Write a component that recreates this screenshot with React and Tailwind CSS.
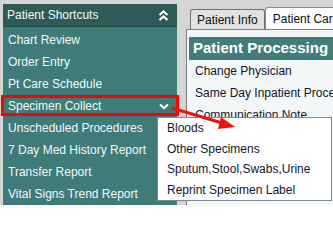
import React from 'react';

const shortcuts = [
  'Chart Review',
  'Order Entry',
  'Pt Care Schedule',
  'Specimen Collect',
  'Unscheduled Procedures',
  '7 Day Med History Report',
  'Transfer Report',
  'Vital Signs Trend Report',
];

const specimenMenu = ['Bloods', 'Other Specimens', 'Sputum,Stool,Swabs,Urine', 'Reprint Specimen Label'];

const processing = ['Change Physician', 'Same Day Inpatient Procedure', 'Communication Note'];

const ShortcutPanel = () => {
  return (
    <aside className="w-[174px] shrink-0 flex flex-col bg-[#3f7b78] text-[#f4f8f8]">
      {/* header */}
      <div className="h-[23px] shrink-0 flex items-center justify-between pl-[4px] pr-[8px] bg-[#2e5b58] border-b border-[#27504d]">
        <span className="text-[12px]">Patient Shortcuts</span>
        <svg width="11" height="11" viewBox="0 0 11 11" fill="none" stroke="white" strokeWidth="2.2">
          <polyline points="1.5,5 5.5,1.5 9.5,5" />
          <polyline points="1.5,10 5.5,6.5 9.5,10" />
        </svg>
      </div>
      <ul className="flex-1 pt-[2px]">
        {shortcuts.map((s) => (
          <li key={s} className="h-[22px] flex items-center justify-between pl-[5px] pr-[8px] text-[12px] whitespace-nowrap">
            <span>{s}</span>
            {s === 'Specimen Collect' && (
              <svg width="10" height="7" viewBox="0 0 10 7" fill="none" stroke="white" strokeWidth="2.2">
                <polyline points="1,1.5 5,5 9,1.5" />
              </svg>
            )}
          </li>
        ))}
      </ul>
    </aside>
  );
};

const CarePanel = () => {
  return (
    <main className="flex-1 flex flex-col ml-[9px] min-w-0">
      {/* tabs */}
      <div className="h-[25px] shrink-0 flex items-end pl-[4px] whitespace-nowrap">
        <div className="h-[20px] shrink-0 px-[6px] flex items-center bg-[#e2e2e2] border border-b-0 border-[#6f6f6f] rounded-t-[3px] text-[12px] text-[#111]">
          Patient Info
        </div>
        <div className="h-[22px] shrink-0 pl-[7px] pr-[8px] flex items-center bg-[#fcfcfc] border border-b-0 border-[#8a8a8a] rounded-t-[3px] text-[12px] text-[#111]">
          Patient Care
        </div>
      </div>
      <div className="flex-1 bg-[#f3f7f7] border-l border-t border-[#7e7e7e] pt-[7px] pl-[2px] whitespace-nowrap overflow-hidden">
        <div className="h-[23px] flex items-center pl-[4px] bg-[#427d7a] text-white text-[15px] font-bold">
          Patient Processing
        </div>
        {processing.map((p) => (
          <div key={p} className="h-[22px] flex items-center pl-[6px] text-[12px] text-[#14142e]">
            {p}
          </div>
        ))}
      </div>
    </main>
  );
};

export default function App() {
  return (
    <div className="relative w-[333px] h-[205px] overflow-hidden bg-[#d5d5d5] font-['Liberation_Sans',Arial,sans-serif]">
      <div className="flex h-full pt-[4px] pl-[3px]">
        <ShortcutPanel />
        <CarePanel />
      </div>

      {/* red highlight around Specimen Collect */}
      <div className="absolute left-[1px] top-[95px] w-[178px] h-[21px] border-[3px] border-[#ff0000] pointer-events-none" />

      {/* specimen dropdown */}
      <div className="absolute left-[157px] top-[117px] w-[175px] h-[84px] bg-white border border-[#7d8a99] text-[12px] text-[#14142e]">
        {specimenMenu.map((m) => (
          <div key={m} className="h-[20.5px] flex items-center pl-[9px] whitespace-nowrap">
            {m}
          </div>
        ))}
      </div>

      {/* arrow */}
      <svg className="absolute left-0 top-0 pointer-events-none" width="333" height="205">
        <line x1="172" y1="108" x2="222" y2="123" stroke="#ee1111" strokeWidth="3" />
        <polygon points="235,127 221,117 218,129" fill="#ee1111" />
      </svg>
    </div>
  );
}
